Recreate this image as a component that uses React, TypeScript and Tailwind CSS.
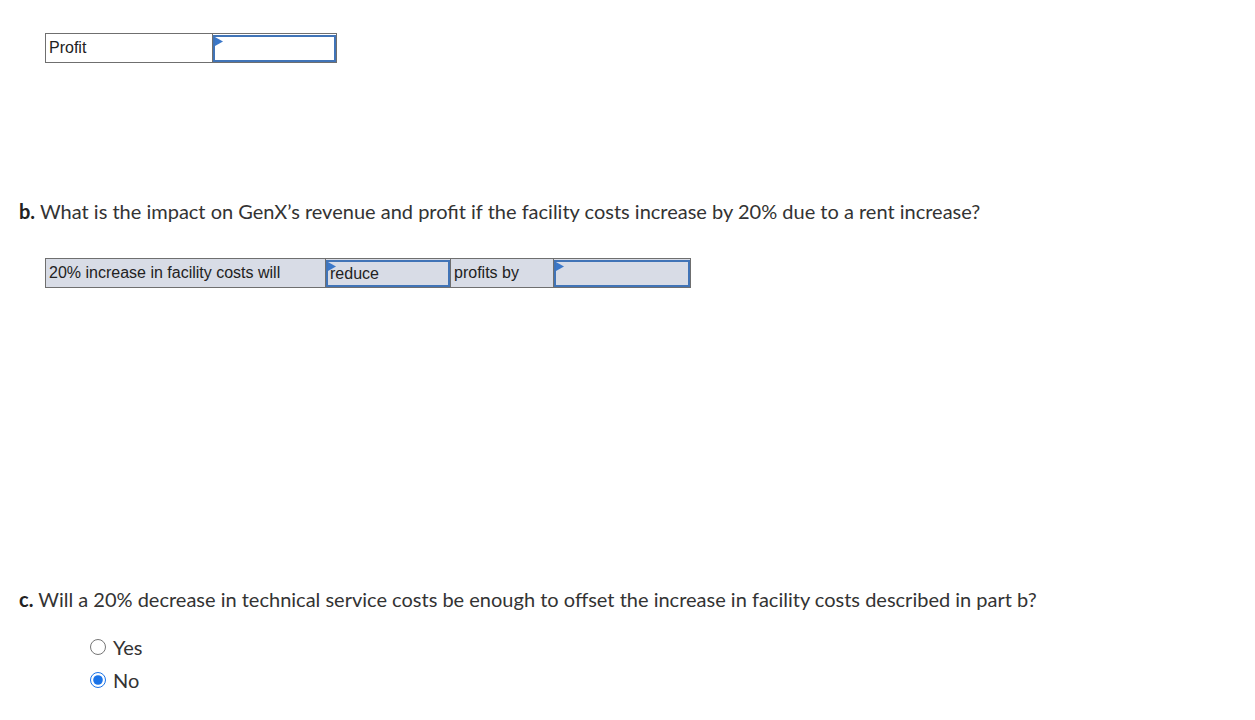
import { useState } from 'react';

function Flag() {
    return (
        <svg className="absolute left-0 top-0" width="8" height="9" viewBox="0 0 8 9">
            <polygon points="0,0 8,4.5 0,9" fill="#3b78c9" />
        </svg>
    );
}

function InputCell({ width, value, shaded }: { width: string; value?: string; shaded?: boolean }) {
    return (
        <td className={`relative border border-[#6f6f6f] p-0 ${width}`}>
            <div className={`relative h-[27px] border-2 border-[#4174b7] ${shaded ? 'bg-[#d8dce6]' : 'bg-white'} px-[2px] leading-[23px]`}>
                <Flag />
                {value}
            </div>
        </td>
    );
}

export default function App() {
    const [answer, setAnswer] = useState('No');

    return (
        <div className="min-h-[720px] bg-white text-[#333] [font-family:Lato,'Open_Sans',sans-serif]">
            {/* Part a table */}
            <div className="pt-[33px] pl-[45px]">
                <table className="border-collapse text-[16px] text-[#222] [font-family:'Liberation_Sans',Arial,sans-serif]">
                    <tbody>
                        <tr>
                            <td className="h-[29px] w-[167px] border border-[#6f6f6f] px-[3px] leading-[20px]">Profit</td>
                            <InputCell width="w-[124px]" />
                        </tr>
                    </tbody>
                </table>
            </div>

            {/* Part b */}
            <p className="mt-[136px] pl-[19px] text-[20px] leading-[24px]">
                <b className="font-bold text-[#222]">b.</b> What is the impact on GenX’s revenue and profit if the facility costs increase by 20% due to a rent increase?
            </p>

            <div className="mt-[35px] pl-[45px]">
                <table className="border-collapse bg-[#d8dce6] text-[16px] text-[#222] [font-family:'Liberation_Sans',Arial,sans-serif]">
                    <tbody>
                        <tr>
                            <td className="h-[29px] w-[280px] border border-[#6f6f6f] px-[3px] leading-[20px]">20% increase in facility costs will</td>
                            <InputCell width="w-[125px]" value="reduce" shaded />
                            <td className="w-[103px] border border-[#6f6f6f] px-[3px] leading-[20px]">profits by</td>
                            <InputCell width="w-[137px]" shaded />
                        </tr>
                    </tbody>
                </table>
            </div>

            {/* Part c */}
            <p className="mt-[299px] pl-[19px] text-[20px] leading-[24px]">
                <b className="font-bold text-[#222]">c.</b> Will a 20% decrease in technical service costs be enough to offset the increase in facility costs described in part b?
            </p>

            <div className="mt-[25px] flex flex-col gap-[11px] pl-[90px] text-[20px]">
                {['Yes', 'No'].map(opt => (
                    <label key={opt} className="flex h-[22px] items-center gap-[7px]">
                        <input
                            type="radio"
                            name="partc"
                            checked={answer === opt}
                            onChange={() => setAnswer(opt)}
                            className="m-0 h-[16px] w-[16px] accent-[#1a73e8]"
                        />
                        {opt}
                    </label>
                ))}
            </div>
        </div>
    );
}
